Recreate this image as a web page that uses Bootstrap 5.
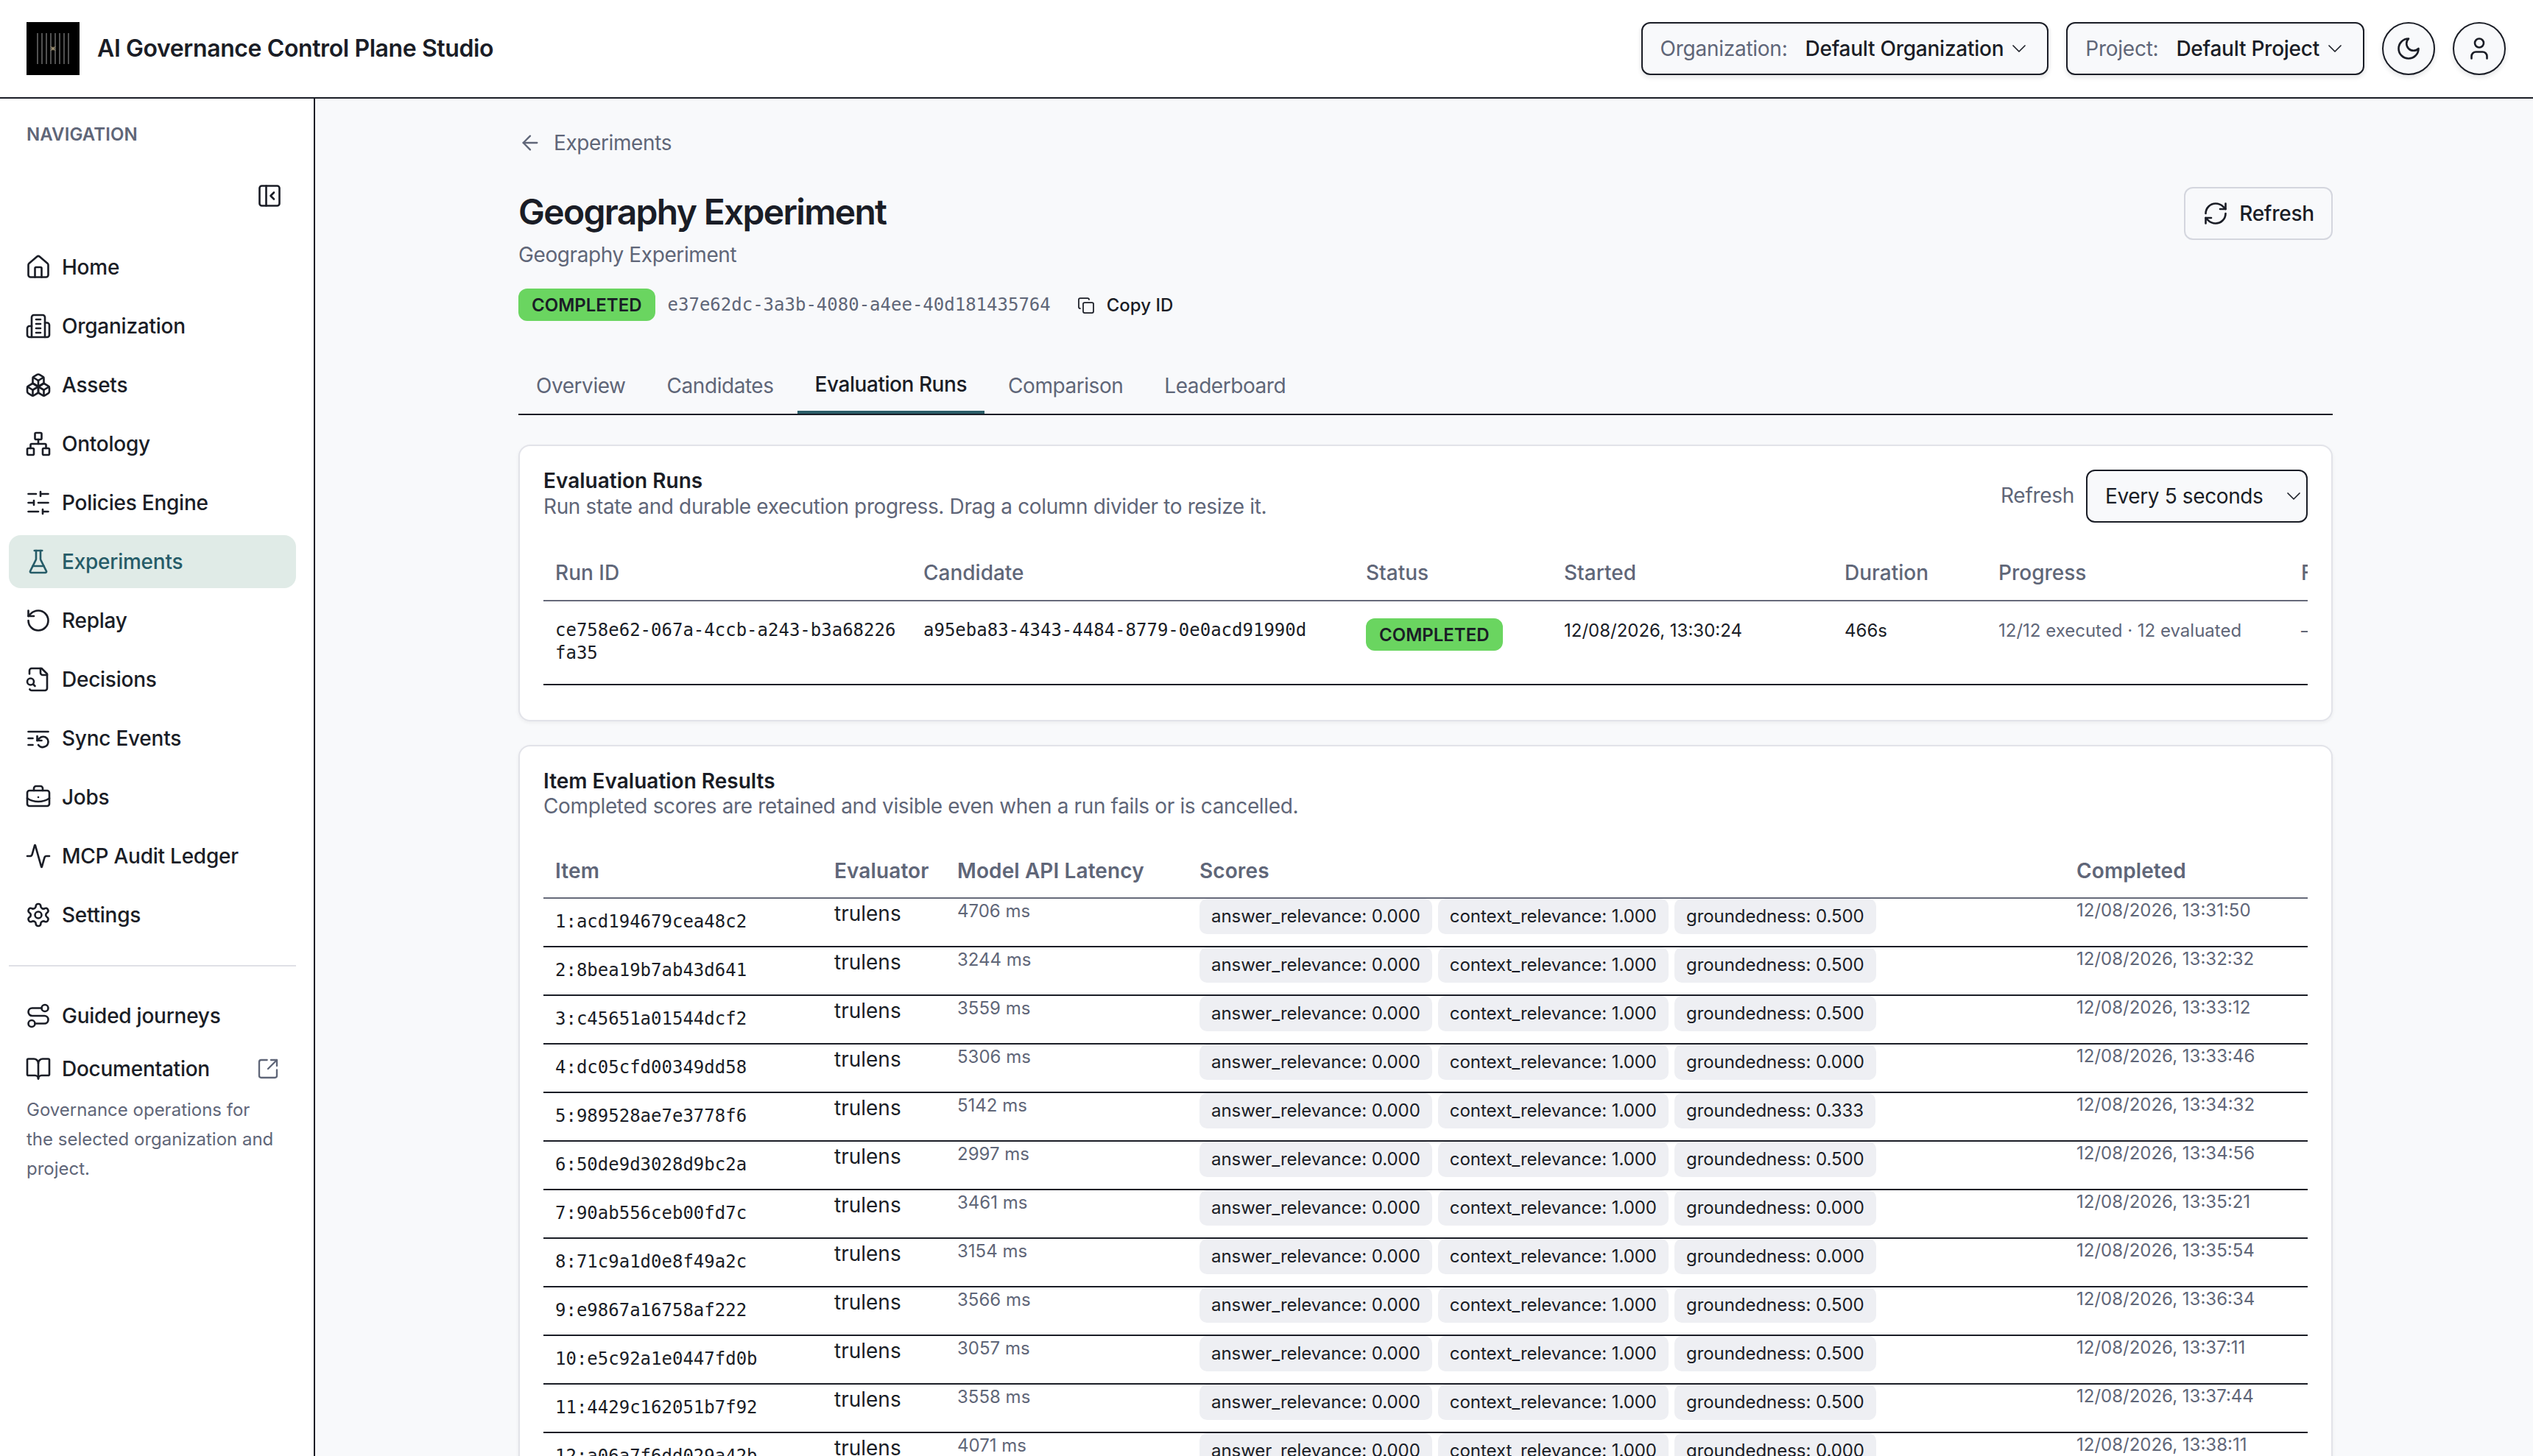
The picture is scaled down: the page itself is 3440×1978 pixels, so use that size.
<!DOCTYPE html>
<html lang="en">
<head>
<meta charset="utf-8">
<title>AI Governance Control Plane Studio</title>
<link rel="stylesheet" href="https://cdn.jsdelivr.net/npm/bootstrap@5.3.0/dist/css/bootstrap.min.css">
<style>
:root{--ink:#1a1d26;--mute:#5f6678;--paper:#f8f9fb;--teal:#265c68}
html,body{height:100%}
body{font-family:"Inter","Liberation Sans",sans-serif;font-size:28px;color:var(--ink);background:#fff;overflow:hidden}
.ico{flex:none;fill:none;stroke:currentColor;stroke-width:1.75;stroke-linecap:round;stroke-linejoin:round}
.ico.thin{stroke-width:1.25}
.i36{width:36px;height:36px}.i32{width:32px;height:32px}.i24{width:24px;height:24px}
.mono{font-family:"DejaVu Sans Mono","Liberation Mono",monospace;font-size:24px}
.topbar{height:134px;border-bottom:2px solid var(--ink);padding:0 37px 0 36px;flex:none}
.brandmark{width:72px;height:72px;flex:none}
.brandname{font-size:32px;font-weight:600;margin-left:24px;letter-spacing:-.4px}
.sel-btn{height:72px;font-size:28px;line-height:36px;padding:0 22px 0 24px;background:var(--paper);border:2px solid var(--ink);border-radius:12px;color:var(--ink);font-weight:500;letter-spacing:-.25px;box-shadow:0 3px 6px rgba(26,29,38,.12)}
.sel-btn .lbl{color:var(--mute);font-weight:400;margin-right:24px}
.sel-btn .ico{margin-left:5px}
.round-btn{width:72px;height:72px;padding:0;border-radius:50%;background:var(--paper);border:2px solid var(--ink);color:var(--ink);box-shadow:0 3px 6px rgba(26,29,38,.12)}
.shell{min-height:0}
.sidenav{width:428px;flex:none;border-right:2px solid var(--ink);padding-top:29px;background:#fff}
.navhead{padding-left:36px;font-size:24px;line-height:40px;font-weight:600;color:var(--mute);letter-spacing:.1px}
.collapse-row{margin-top:45px;padding-right:42px;height:36px}
.navlist{margin:43px 24px 0 12px;gap:8px}
.navitem{height:72px;padding:0 22px;gap:14px;border-radius:16px;color:var(--ink);font-weight:500;text-decoration:none;font-size:28px;letter-spacing:-.25px}
.navitem.on{background:#e0ebe7;color:var(--teal)}
.navrule{margin:32px 24px 31px 12px;height:2px;background:#dfe0e6}
.navlist2{margin:0 24px 0 12px}
.extlink{margin-left:auto;color:var(--mute)}
.navnote{margin:0;padding:0 54px 0 36px;font-size:24px;line-height:40px;color:var(--mute)}
.mainpane{background:var(--paper);padding:40px 272px 0 276px;min-width:0;overflow:hidden}
.backlink{color:var(--mute);text-decoration:none;line-height:40px;gap:16px;margin-bottom:40px;letter-spacing:-.4px}
.pagetitle{font-size:48px;line-height:60px;font-weight:600;margin:4px 0 8px;letter-spacing:-1.7px}
.pagesub{line-height:40px;color:var(--mute);margin:0;letter-spacing:-.4px}
.ghost-btn{height:72px;width:202px;font-size:28px;font-weight:500;letter-spacing:-.25px;background:var(--paper);border:2px solid #d4d6de;border-radius:12px;color:var(--ink);gap:14px;padding:0}
.metaline{margin-top:26px;height:44px}
.statuspill{display:inline-block;background:#6ad560;color:var(--ink);font-size:24px;font-weight:600;line-height:46px;height:44px;padding:0 18px;border-radius:12px}
.runhash{color:var(--mute);margin-left:17px}
.copybtn{font-size:24px;font-weight:500;margin-left:36px;gap:16px;padding-top:2px}
.tabstrip{margin-top:48px;border-bottom:2px solid var(--ink);gap:8px}
.tabstrip .nav-link{font-size:28px;line-height:40px;letter-spacing:-.45px;padding:20px 24px 14px;color:var(--mute);border-bottom:4px solid transparent}
.tabstrip .nav-link.active{color:var(--ink);font-weight:500;border-bottom-color:#2a5d68;padding-top:18px;padding-bottom:16px}
.panel{background:#fff;border:2px solid #e2e3e9;border-radius:16px;padding:30px 32px 47px;box-shadow:0 2px 5px rgba(26,29,38,.06);margin-top:40px}
.panel + .panel{margin-top:32px}
.paneltitle{font-size:28px;line-height:35px;font-weight:600;margin:0}
.paneldesc{font-size:28px;line-height:35px;color:var(--mute);margin:0;letter-spacing:-.36px}
.panel + .panel .paneltitle{line-height:34px}
.refreshlbl{color:var(--mute);margin-right:16px;letter-spacing:-.3px}
.refreshsel{width:301px;height:72px;margin-top:2px;font-size:28px;letter-spacing:-.38px;color:var(--ink);padding:0 40px 0 24px;border:2px solid var(--ink);border-radius:12px;background-color:var(--paper);background-position:right 1px center;background-size:32px 32px;background-image:url("data:image/svg+xml,%3csvg xmlns='http://www.w3.org/2000/svg' viewBox='0 0 24 24' fill='none' stroke='%231a1d26' stroke-width='1.25' stroke-linecap='round' stroke-linejoin='round'%3e%3cpath d='m6 9 6 6 6-6'/%3e%3c/svg%3e")}
.tablebox{overflow:hidden}
.datagrid{table-layout:fixed;border-collapse:separate;border-spacing:0;margin:0}
.datagrid th{padding:20px 16px 19px;line-height:36px;font-size:28px;font-weight:500;color:var(--mute);border-bottom:2px solid #666a7a;white-space:nowrap;overflow:hidden}
.datagrid td{vertical-align:top;border-bottom:2px solid var(--ink)}
.tablebox-runs{margin-top:30px}
.grid-runs{width:2650px}
.grid-runs td{padding:24px 16px 26px;font-size:24px;line-height:31px;white-space:nowrap;overflow:hidden}
.grid-runs td.wrapcell{white-space:normal;word-break:break-all}
.grid-runs .statuspill{margin-top:-1px;vertical-align:top}
.c-run{width:500px}.c-cand{width:601px}.c-stat{width:269px}.c-start{width:381px}.c-dur{width:209px}.c-prog{width:411px}.c-rest{width:279px}
.tone-mute{color:var(--mute)}
.grid-items{width:2396px}
.tablebox-items{margin-top:32px}
.grid-items th{font-weight:600;padding-bottom:18px;letter-spacing:.1px}
.grid-items td{padding:0 16px;height:66px;white-space:nowrap}
.c-item{width:379px}.c-eval{width:167px}.c-lat{width:329px}.c-score{width:1191px}.c-done{width:330px}
.grid-items td.cell-item{padding-top:16px;line-height:30px}
.cell-eval{line-height:40px;font-size:28px}
.cell-lat{line-height:34px;font-size:24px;color:var(--mute)}
.cell-done{line-height:32px;font-size:24px;color:var(--mute)}
.chipline{gap:8px}
.scorechip{height:48px;line-height:48px;padding:0 16px;background:#eeeff3;border-radius:10px;font-size:24px;letter-spacing:-.05px;white-space:nowrap}
</style>
</head>
<body class="d-flex flex-column">
<header class="topbar d-flex align-items-center">
  <svg class="brandmark" viewBox="0 0 72 72" role="img" aria-label="logo">
    <rect width="72" height="72" fill="#000"/>
    <g stroke="#6c6c6c" stroke-width="1.5"><path d="M15 15v42M21 15v42M27 15v42M33 15v42M39 15v42M45 15v42M51 15v42M57 15v42"/></g>
    <g stroke="#a89a78" stroke-width="1" fill="none"><path d="M33 33l6 6M39 33l-6 6"/><circle cx="36" cy="36" r="2"/></g>
  </svg>
  <div class="brandname">AI Governance Control Plane Studio</div>
  <div class="ms-auto d-flex align-items-center gap-4">
    <button class="btn sel-btn d-flex align-items-center"><span class="lbl">Organization:</span>Default Organization<svg class="ico thin i32" viewBox="0 0 24 24"><path d="m6 9 6 6 6-6"/></svg></button>
    <button class="btn sel-btn d-flex align-items-center"><span class="lbl">Project:</span>Default Project<svg class="ico thin i32" viewBox="0 0 24 24"><path d="m6 9 6 6 6-6"/></svg></button>
    <button class="btn round-btn d-flex align-items-center justify-content-center"><svg class="ico i36" viewBox="0 0 24 24"><path d="M12 3a6 6 0 0 0 9 9 9 9 0 1 1-9-9Z"/></svg></button>
    <button class="btn round-btn d-flex align-items-center justify-content-center"><svg class="ico i36" viewBox="0 0 24 24"><path d="M19 21v-2a4 4 0 0 0-4-4H9a4 4 0 0 0-4 4v2"/><circle cx="12" cy="7" r="4"/></svg></button>
  </div>
</header>
<div class="shell d-flex flex-grow-1">
  <aside class="sidenav">
    <div class="navhead">NAVIGATION</div>
    <div class="collapse-row d-flex justify-content-end"><svg class="ico i36" viewBox="0 0 24 24"><rect width="18" height="18" x="3" y="3" rx="2"/><path d="M9 3v18"/><path d="m16 15-3-3 3-3"/></svg></div>
    <nav class="navlist d-flex flex-column">
      <a class="navitem d-flex align-items-center" href="#"><svg class="ico i36" viewBox="0 0 24 24"><path d="M15 21v-8a1 1 0 0 0-1-1h-4a1 1 0 0 0-1 1v8"/><path d="M3 10a2 2 0 0 1 .709-1.528l7-5.999a2 2 0 0 1 2.582 0l7 5.999A2 2 0 0 1 21 10v9a2 2 0 0 1-2 2H5a2 2 0 0 1-2-2z"/></svg>Home</a>
      <a class="navitem d-flex align-items-center" href="#"><svg class="ico i36" viewBox="0 0 24 24"><path d="M6 22V4a2 2 0 0 1 2-2h8a2 2 0 0 1 2 2v18Z"/><path d="M6 12H4a2 2 0 0 0-2 2v6a2 2 0 0 0 2 2h2"/><path d="M18 9h2a2 2 0 0 1 2 2v9a2 2 0 0 1-2 2h-2"/><path d="M10 6h4"/><path d="M10 10h4"/><path d="M10 14h4"/><path d="M10 18h4"/></svg>Organization</a>
      <a class="navitem d-flex align-items-center" href="#"><svg class="ico i36" viewBox="0 0 24 24"><path d="M2.97 12.92A2 2 0 0 0 2 14.63v3.24a2 2 0 0 0 .97 1.71l3 1.8a2 2 0 0 0 2.06 0L12 19v-5.5l-5-3-4.03 2.42Z"/><path d="m7 16.5-4.74-2.85"/><path d="m7 16.5 5-3"/><path d="M7 16.5v5.17"/><path d="M12 13.5V19l3.97 2.38a2 2 0 0 0 2.06 0l3-1.8a2 2 0 0 0 .97-1.71v-3.24a2 2 0 0 0-.97-1.71L17 10.5l-5 3Z"/><path d="m17 16.5-5-3"/><path d="m17 16.5 4.74-2.85"/><path d="M17 16.5v5.17"/><path d="M7.97 4.42A2 2 0 0 0 7 6.13v4.37l5 3 5-3V6.13a2 2 0 0 0-.97-1.71l-3-1.8a2 2 0 0 0-2.06 0l-3 1.8Z"/><path d="M12 8 7.26 5.15"/><path d="m12 8 4.74-2.85"/><path d="M12 13.5V8"/></svg>Assets</a>
      <a class="navitem d-flex align-items-center" href="#"><svg class="ico i36" viewBox="0 0 24 24"><rect x="16" y="16" width="6" height="6" rx="1"/><rect x="2" y="16" width="6" height="6" rx="1"/><rect x="9" y="2" width="6" height="6" rx="1"/><path d="M5 16v-3a1 1 0 0 1 1-1h12a1 1 0 0 1 1 1v3"/><path d="M12 12V8"/></svg>Ontology</a>
      <a class="navitem d-flex align-items-center" href="#"><svg class="ico i36" viewBox="0 0 24 24"><path d="M21 4h-7M10 4H3M21 12h-9M8 12H3M21 20h-5M12 20H3M14 2v4M8 10v4M16 18v4"/></svg>Policies Engine</a>
      <a class="navitem on d-flex align-items-center" href="#"><svg class="ico i36" viewBox="0 0 24 24"><path d="M10 2v7.527a2 2 0 0 1-.211.896L4.72 20.55a1 1 0 0 0 .9 1.45h12.76a1 1 0 0 0 .9-1.45l-5.069-10.127A2 2 0 0 1 14 9.527V2"/><path d="M8.5 2h7"/><path d="M7 16h10"/></svg>Experiments</a>
      <a class="navitem d-flex align-items-center" href="#"><svg class="ico i36" viewBox="0 0 24 24"><path d="M3 12a9 9 0 1 0 9-9 9.75 9.75 0 0 0-6.74 2.74L3 8"/><path d="M3 3v5h5"/></svg>Replay</a>
      <a class="navitem d-flex align-items-center" href="#"><svg class="ico i36" viewBox="0 0 24 24"><path d="M14 2v4a2 2 0 0 0 2 2h4"/><path d="M4.268 21a2 2 0 0 0 1.727 1H18a2 2 0 0 0 2-2V7l-5-5H6a2 2 0 0 0-2 2v3"/><path d="m9 18-1.5-1.5"/><circle cx="5" cy="14" r="3"/></svg>Decisions</a>
      <a class="navitem d-flex align-items-center" href="#"><svg class="ico i36" viewBox="0 0 24 24"><path d="M21 6H3"/><path d="M7 12H3"/><path d="M7 18H3"/><path d="M12 18a5 5 0 0 0 9-3 4.5 4.5 0 0 0-4.5-4.5c-1.33 0-2.54.54-3.41 1.41L11 14"/><path d="M11 10v4h4"/></svg>Sync Events</a>
      <a class="navitem d-flex align-items-center" href="#"><svg class="ico i36" viewBox="0 0 24 24"><path d="M12 12h.01"/><path d="M16 6V4a2 2 0 0 0-2-2h-4a2 2 0 0 0-2 2v2"/><path d="M22 13a18.15 18.15 0 0 1-20 0"/><rect width="20" height="14" x="2" y="6" rx="2"/></svg>Jobs</a>
      <a class="navitem d-flex align-items-center" href="#"><svg class="ico i36" viewBox="0 0 24 24"><path d="M22 12h-2.48a2 2 0 0 0-1.93 1.46l-2.35 8.36a.25.25 0 0 1-.48 0L9.24 2.18a.25.25 0 0 0-.48 0l-2.35 8.36A2 2 0 0 1 4.49 12H2"/></svg>MCP Audit Ledger</a>
      <a class="navitem d-flex align-items-center" href="#"><svg class="ico i36" viewBox="0 0 24 24"><path d="M12.22 2h-.44a2 2 0 0 0-2 2v.18a2 2 0 0 1-1 1.73l-.43.25a2 2 0 0 1-2 0l-.15-.08a2 2 0 0 0-2.73.73l-.22.38a2 2 0 0 0 .73 2.73l.15.1a2 2 0 0 1 1 1.72v.51a2 2 0 0 1-1 1.74l-.15.09a2 2 0 0 0-.73 2.73l.22.38a2 2 0 0 0 2.73.73l.15-.08a2 2 0 0 1 2 0l.43.25a2 2 0 0 1 1 1.73V20a2 2 0 0 0 2 2h.44a2 2 0 0 0 2-2v-.18a2 2 0 0 1 1-1.73l.43-.25a2 2 0 0 1 2 0l.15.08a2 2 0 0 0 2.73-.73l.22-.39a2 2 0 0 0-.73-2.73l-.15-.08a2 2 0 0 1-1-1.74v-.5a2 2 0 0 1 1-1.74l.15-.09a2 2 0 0 0 .73-2.73l-.22-.38a2 2 0 0 0-2.73-.73l-.15.08a2 2 0 0 1-2 0l-.43-.25a2 2 0 0 1-1-1.73V4a2 2 0 0 0-2-2z"/><circle cx="12" cy="12" r="3"/></svg>Settings</a>
    </nav>
    <div class="navrule"></div>
    <div class="navlist2 d-flex flex-column">
      <a class="navitem d-flex align-items-center" href="#"><svg class="ico i36" viewBox="0 0 24 24"><circle cx="6" cy="19" r="3"/><path d="M9 19h8.5a3.5 3.5 0 0 0 0-7h-11a3.5 3.5 0 0 1 0-7H15"/><circle cx="18" cy="5" r="3"/></svg>Guided journeys</a>
      <a class="navitem d-flex align-items-center" href="#"><svg class="ico i36" viewBox="0 0 24 24"><path d="M12 7v14"/><path d="M3 18a1 1 0 0 1-1-1V4a1 1 0 0 1 1-1h5a4 4 0 0 1 4 4 4 4 0 0 1 4-4h5a1 1 0 0 1 1 1v13a1 1 0 0 1-1 1h-6a3 3 0 0 0-3 3 3 3 0 0 0-3-3z"/></svg>Documentation<svg class="ico i32 extlink" viewBox="0 0 24 24"><path d="M21 13v6a2 2 0 0 1-2 2H5a2 2 0 0 1-2-2V5a2 2 0 0 1 2-2h6"/><path d="m21 3-9 9"/><path d="M15 3h6v6"/></svg></a>
    </div>
    <p class="navnote">Governance operations for the selected organization and project.</p>
  </aside>
  <main class="mainpane flex-grow-1">
    <a class="backlink d-flex align-items-center" href="#"><svg class="ico i32" viewBox="0 0 24 24"><path d="m12 19-7-7 7-7"/><path d="M19 12H5"/></svg>Experiments</a>
    <div class="d-flex justify-content-between align-items-start">
      <div>
        <h1 class="pagetitle">Geography Experiment</h1>
        <p class="pagesub">Geography Experiment</p>
      </div>
      <button class="btn ghost-btn d-flex align-items-center justify-content-center"><svg class="ico i36" viewBox="0 0 24 24"><path d="M3 12a9 9 0 0 1 9-9 9.75 9.75 0 0 1 6.74 2.74L21 8"/><path d="M21 3v5h-5"/><path d="M21 12a9 9 0 0 1-9 9 9.75 9.75 0 0 1-6.74-2.74L3 16"/><path d="M8 16H3v5"/></svg>Refresh</button>
    </div>
    <div class="metaline d-flex align-items-center">
      <span class="statuspill">COMPLETED</span>
      <span class="mono runhash">e37e62dc-3a3b-4080-a4ee-40d181435764</span>
      <span class="copybtn d-flex align-items-center"><svg class="ico i24" viewBox="0 0 24 24" stroke-width="2"><rect width="14" height="14" x="8" y="8" rx="2"/><path d="M4 16c-1.1 0-2-.9-2-2V4c0-1.1.9-2 2-2h10c1.1 0 2 .9 2 2"/></svg>Copy ID</span>
    </div>
    <ul class="nav tabstrip">
      <li class="nav-item"><a class="nav-link" href="#">Overview</a></li>
      <li class="nav-item"><a class="nav-link" href="#">Candidates</a></li>
      <li class="nav-item"><a class="nav-link active" href="#">Evaluation Runs</a></li>
      <li class="nav-item"><a class="nav-link" href="#">Comparison</a></li>
      <li class="nav-item"><a class="nav-link" href="#">Leaderboard</a></li>
    </ul>
    <section class="panel">
      <div class="d-flex justify-content-between align-items-start">
        <div>
          <h2 class="paneltitle">Evaluation Runs</h2>
          <p class="paneldesc">Run state and durable execution progress. Drag a column divider to resize it.</p>
        </div>
        <div class="d-flex align-items-center">
          <span class="refreshlbl">Refresh</span>
          <select class="form-select refreshsel"><option>Every 5 seconds</option></select>
        </div>
      </div>
      <div class="tablebox tablebox-runs">
        <table class="datagrid grid-runs">
          <colgroup><col class="c-run"><col class="c-cand"><col class="c-stat"><col class="c-start"><col class="c-dur"><col class="c-prog"><col class="c-rest"></colgroup>
          <thead><tr><th>Run ID</th><th>Candidate</th><th>Status</th><th>Started</th><th>Duration</th><th>Progress</th><th>Failure</th></tr></thead>
          <tbody><tr><td class="mono wrapcell">ce758e62-067a-4ccb-a243-b3a68226fa35</td><td class="mono">a95eba83-4343-4484-8779-0e0acd91990d</td><td><span class="statuspill">COMPLETED</span></td><td>12/08/2026, 13:30:24</td><td>466s</td><td class="tone-mute">12/12 executed · 12 evaluated</td><td class="tone-mute">–</td></tr></tbody>
        </table>
      </div>
    </section>
    <section class="panel">
      <h2 class="paneltitle">Item Evaluation Results</h2>
      <p class="paneldesc">Completed scores are retained and visible even when a run fails or is cancelled.</p>
      <div class="tablebox tablebox-items">
        <table class="datagrid grid-items">
          <colgroup><col class="c-item"><col class="c-eval"><col class="c-lat"><col class="c-score"><col class="c-done"></colgroup>
          <thead><tr><th>Item</th><th>Evaluator</th><th>Model API Latency</th><th>Scores</th><th>Completed</th></tr></thead>
          <tbody>
            <tr><td class="mono cell-item">1:acd194679cea48c2</td><td class="cell-eval">trulens</td><td class="cell-lat">4706 ms</td><td><div class="d-flex chipline"><span class="scorechip">answer_relevance: 0.000</span><span class="scorechip">context_relevance: 1.000</span><span class="scorechip">groundedness: 0.500</span></div></td><td class="cell-done">12/08/2026, 13:31:50</td></tr>
            <tr><td class="mono cell-item">2:8bea19b7ab43d641</td><td class="cell-eval">trulens</td><td class="cell-lat">3244 ms</td><td><div class="d-flex chipline"><span class="scorechip">answer_relevance: 0.000</span><span class="scorechip">context_relevance: 1.000</span><span class="scorechip">groundedness: 0.500</span></div></td><td class="cell-done">12/08/2026, 13:32:32</td></tr>
            <tr><td class="mono cell-item">3:c45651a01544dcf2</td><td class="cell-eval">trulens</td><td class="cell-lat">3559 ms</td><td><div class="d-flex chipline"><span class="scorechip">answer_relevance: 0.000</span><span class="scorechip">context_relevance: 1.000</span><span class="scorechip">groundedness: 0.500</span></div></td><td class="cell-done">12/08/2026, 13:33:12</td></tr>
            <tr><td class="mono cell-item">4:dc05cfd00349dd58</td><td class="cell-eval">trulens</td><td class="cell-lat">5306 ms</td><td><div class="d-flex chipline"><span class="scorechip">answer_relevance: 0.000</span><span class="scorechip">context_relevance: 1.000</span><span class="scorechip">groundedness: 0.000</span></div></td><td class="cell-done">12/08/2026, 13:33:46</td></tr>
            <tr><td class="mono cell-item">5:989528ae7e3778f6</td><td class="cell-eval">trulens</td><td class="cell-lat">5142 ms</td><td><div class="d-flex chipline"><span class="scorechip">answer_relevance: 0.000</span><span class="scorechip">context_relevance: 1.000</span><span class="scorechip">groundedness: 0.333</span></div></td><td class="cell-done">12/08/2026, 13:34:32</td></tr>
            <tr><td class="mono cell-item">6:50de9d3028d9bc2a</td><td class="cell-eval">trulens</td><td class="cell-lat">2997 ms</td><td><div class="d-flex chipline"><span class="scorechip">answer_relevance: 0.000</span><span class="scorechip">context_relevance: 1.000</span><span class="scorechip">groundedness: 0.500</span></div></td><td class="cell-done">12/08/2026, 13:34:56</td></tr>
            <tr><td class="mono cell-item">7:90ab556ceb00fd7c</td><td class="cell-eval">trulens</td><td class="cell-lat">3461 ms</td><td><div class="d-flex chipline"><span class="scorechip">answer_relevance: 0.000</span><span class="scorechip">context_relevance: 1.000</span><span class="scorechip">groundedness: 0.000</span></div></td><td class="cell-done">12/08/2026, 13:35:21</td></tr>
            <tr><td class="mono cell-item">8:71c9a1d0e8f49a2c</td><td class="cell-eval">trulens</td><td class="cell-lat">3154 ms</td><td><div class="d-flex chipline"><span class="scorechip">answer_relevance: 0.000</span><span class="scorechip">context_relevance: 1.000</span><span class="scorechip">groundedness: 0.000</span></div></td><td class="cell-done">12/08/2026, 13:35:54</td></tr>
            <tr><td class="mono cell-item">9:e9867a16758af222</td><td class="cell-eval">trulens</td><td class="cell-lat">3566 ms</td><td><div class="d-flex chipline"><span class="scorechip">answer_relevance: 0.000</span><span class="scorechip">context_relevance: 1.000</span><span class="scorechip">groundedness: 0.500</span></div></td><td class="cell-done">12/08/2026, 13:36:34</td></tr>
            <tr><td class="mono cell-item">10:e5c92a1e0447fd0b</td><td class="cell-eval">trulens</td><td class="cell-lat">3057 ms</td><td><div class="d-flex chipline"><span class="scorechip">answer_relevance: 0.000</span><span class="scorechip">context_relevance: 1.000</span><span class="scorechip">groundedness: 0.500</span></div></td><td class="cell-done">12/08/2026, 13:37:11</td></tr>
            <tr><td class="mono cell-item">11:4429c162051b7f92</td><td class="cell-eval">trulens</td><td class="cell-lat">3558 ms</td><td><div class="d-flex chipline"><span class="scorechip">answer_relevance: 0.000</span><span class="scorechip">context_relevance: 1.000</span><span class="scorechip">groundedness: 0.500</span></div></td><td class="cell-done">12/08/2026, 13:37:44</td></tr>
            <tr><td class="mono cell-item">12:a06a7f6dd029a42b</td><td class="cell-eval">trulens</td><td class="cell-lat">4071 ms</td><td><div class="d-flex chipline"><span class="scorechip">answer_relevance: 0.000</span><span class="scorechip">context_relevance: 1.000</span><span class="scorechip">groundedness: 0.000</span></div></td><td class="cell-done">12/08/2026, 13:38:11</td></tr>
          </tbody>
        </table>
      </div>
    </section>
  </main>
</div>
<script src="https://cdn.jsdelivr.net/npm/bootstrap@5.3.0/dist/js/bootstrap.bundle.min.js"></script>
</body>
</html>
